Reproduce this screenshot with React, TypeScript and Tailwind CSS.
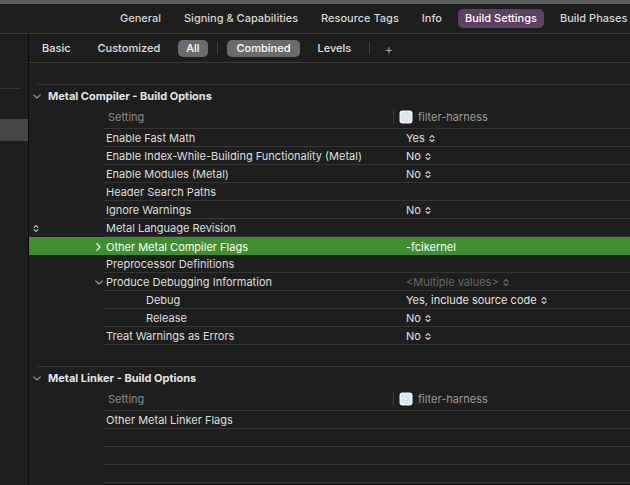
import React from 'react';

type Row = {
  label: string;
  value?: string;
  muted?: boolean;
  selected?: boolean;
  gutter?: 'updown' | 'right' | 'down';
  indent?: boolean;
  noPicker?: boolean;
};

const compilerRows: Row[] = [
  { label: 'Enable Fast Math', value: 'Yes' },
  { label: 'Enable Index-While-Building Functionality (Metal)', value: 'No' },
  { label: 'Enable Modules (Metal)', value: 'No' },
  { label: 'Header Search Paths' },
  { label: 'Ignore Warnings', value: 'No' },
  { label: 'Metal Language Revision', gutter: 'updown' },
  { label: 'Other Metal Compiler Flags', value: '-fcikernel', selected: true, gutter: 'right', noPicker: true },
  { label: 'Preprocessor Definitions' },
  { label: 'Produce Debugging Information', value: '<Multiple values>', muted: true, gutter: 'down' },
  { label: 'Debug', value: 'Yes, include source code', indent: true },
  { label: 'Release', value: 'No', indent: true },
  { label: 'Treat Warnings as Errors', value: 'No' },
];

const linkerRows: Row[] = [
  { label: 'Other Metal Linker Flags' },
  { label: '' },
  { label: '' },
  { label: '' },
];

const tabs = ['General', 'Signing & Capabilities', 'Resource Tags', 'Info', 'Build Settings', 'Build Phases'];

const font = { fontFamily: 'Inter, "Noto Sans", sans-serif' };

function UpDown({ className = '' }: { className?: string }) {
  return (
    <svg width="6" height="9" viewBox="0 0 6 9" className={className} fill="none">
      <path d="M1 3.5 L3 1.5 L5 3.5 M1 5.5 L3 7.5 L5 5.5" stroke="currentColor" strokeWidth="1.1" strokeLinecap="round" strokeLinejoin="round" />
    </svg>
  );
}

function ChevronDown({ className = '' }: { className?: string }) {
  return (
    <svg width="8" height="5" viewBox="0 0 8 5" className={className} fill="none">
      <path d="M0.7 0.8 L4 4 L7.3 0.8" stroke="currentColor" strokeWidth="1.1" strokeLinecap="round" strokeLinejoin="round" />
    </svg>
  );
}

function ChevronRight({ className = '' }: { className?: string }) {
  return (
    <svg width="5" height="8" viewBox="0 0 5 8" className={className} fill="none">
      <path d="M0.8 0.7 L4 4 L0.8 7.3" stroke="currentColor" strokeWidth="1.2" strokeLinecap="round" strokeLinejoin="round" />
    </svg>
  );
}

function TargetIcon() {
  return (
    <svg width="14" height="14" viewBox="0 0 14 14">
      <rect x="0.5" y="0.5" width="13" height="13" rx="3" fill="#eef3f6" />
      <rect x="3" y="3" width="8" height="8" rx="1.5" fill="none" stroke="#c3d6e2" strokeWidth="1" />
      <rect x="5" y="5" width="4" height="4" rx="1" fill="none" stroke="#c3d6e2" strokeWidth="1" />
    </svg>
  );
}

function SettingHeader() {
  return (
    <div className="flex h-[22px]">
      <div className="w-[75px]" />
      <div className="flex flex-1 items-center border-b border-[#343434] pb-[1px]">
        <span className="w-[289px] pl-[4px] text-[11px] text-[#8a8a8a]">Setting</span>
        <span className="h-[14px] w-px bg-[#3a3a3a]" />
        <span className="ml-[5px] flex">
          <TargetIcon />
        </span>
        <span className="ml-[5px] text-[11px] text-[#9a9a9a]">filter-harness</span>
      </div>
    </div>
  );
}

function SettingRow({ row }: { row: Row }) {
  return (
    <div className={`flex h-[18px] ${row.selected ? 'bg-[#3f8e2f]' : ''}`}>
      <div className="relative w-[75px]">
        {row.gutter === 'updown' && <UpDown className="absolute left-[4px] top-[5px] text-[#b0b0b0]" />}
        {row.gutter === 'right' && <ChevronRight className="absolute left-[67px] top-[6px] text-white" />}
        {row.gutter === 'down' && <ChevronDown className="absolute left-[66px] top-[7px] text-[#a0a0a0]" />}
      </div>
      <div className={`flex flex-1 items-center pt-[2px] ${row.selected ? '' : 'border-b border-[#343434]'}`}>
        <span
          className={`w-[302px] truncate text-[11px] ${row.indent ? 'pl-[42px]' : 'pl-[2px]'} ${row.selected ? 'text-white' : 'text-[#dedede]'}`}
        >
          {row.label}
        </span>
        {row.value && (
          <span className={`flex items-center gap-[4px] text-[11px] ${row.muted ? 'text-[#6a6a6a]' : row.selected ? 'text-white' : 'text-[#e2e2e2]'}`}>
            {row.value}
            {!row.noPicker && <UpDown className={row.muted ? 'text-[#6a6a6a]' : 'text-[#c8c8c8]'} />}
          </span>
        )}
      </div>
    </div>
  );
}

function Section({ title, rows }: { title: string; rows: Row[] }) {
  return (
    <div>
      <div className="ml-[8px] h-px bg-[#343434]" />
      <div className="flex h-[22px] items-center pl-[4px]">
        <ChevronDown className="text-[#9a9a9a]" />
        <span className="ml-[7px] text-[11px] font-bold text-[#e4e4e4]">{title}</span>
      </div>
      <SettingHeader />
      {rows.map((row, i) => (
        <SettingRow key={i} row={row} />
      ))}
    </div>
  );
}

export default function App() {
  return (
    <div className="flex h-[485px] w-[630px] flex-col overflow-hidden bg-[#1e1e1e]" style={font}>
      <div className="h-[4px] bg-[#5d5d5d]" />
      <div className="flex h-[30px] items-center gap-[9px] border-b border-[#3c3c3c] pl-[113px]">
        {tabs.map((t) => (
          <span
            key={t}
            className={`flex h-[19px] shrink-0 items-center whitespace-nowrap rounded-[5px] px-[7px] text-[11px] font-medium ${t === 'Build Settings' ? 'bg-[#5a4260] text-white' : 'text-[#d6d6d6]'}`}
          >
            {t}
          </span>
        ))}
      </div>
      <div className="flex flex-1">
        <div className="w-[29px] shrink-0 border-r border-[#0a0a0a]">
          <div className="mt-[54px] h-px w-[20px] bg-[#333333]" />
          <div className="mt-[30px] h-[22px] bg-[#474747]" />
        </div>
        <div className="flex flex-1 flex-col">
          <div className="flex h-[29px] items-center gap-[9px] border-b border-[#3a3a3a] pl-[4px] text-[11px] font-medium text-[#e0e0e0]">
            <span className="px-[9px]">Basic</span>
            <span className="px-[9px]">Customized</span>
            <span className="flex h-[17px] items-center rounded-[5px] bg-[#6b6b6d] px-[8px] text-white">All</span>
            <span className="h-[12px] w-px bg-[#3e3e3e]" />
            <span className="flex h-[17px] items-center rounded-[5px] bg-[#6b6b6d] px-[10px] text-white">Combined</span>
            <span className="ml-[-1px] px-[9px]">Levels</span>
            <span className="h-[12px] w-px bg-[#3e3e3e]" />
            <span className="ml-[5px] text-[14px] font-light text-[#b8b8b8]">+</span>
          </div>
          <div className="h-[21px]" />
          <Section title="Metal Compiler - Build Options" rows={compilerRows} />
          <div className="h-[21px]" />
          <Section title="Metal Linker - Build Options" rows={linkerRows} />
        </div>
      </div>
    </div>
  );
}
